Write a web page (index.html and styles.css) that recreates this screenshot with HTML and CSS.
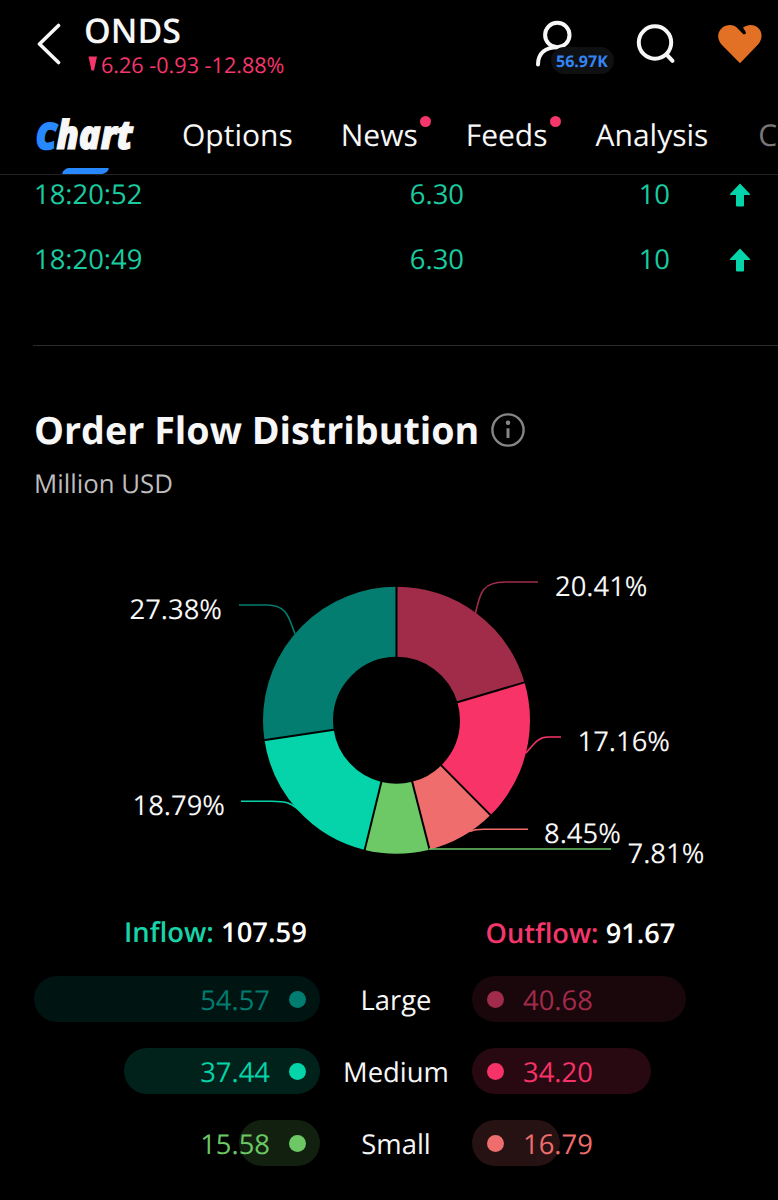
FILE: index.html
```html
<!DOCTYPE html>
<html lang="en">
<head>
    <meta charset="UTF-8">
    <meta name="viewport" content="width=device-width, initial-scale=1.0">
    <title>ONDS</title>
    <link rel="stylesheet" href="styles.css">
</head>
<body>
    <header class="header">
        <svg class="back" width="24" height="42" viewBox="0 0 24 42">
            <path d="M21.5 2.5 L2.5 21 L21.5 39.5"/>
        </svg>
        <div class="stock">
            <h1>ONDS</h1>
            <p>
                <svg width="10" height="16" viewBox="0 0 10 16"><path d="M0.5 0.5 H9 L6 14.5 H3.5 Z"/></svg>
                <span>6.26 -0.93 -12.88%</span>
            </p>
        </div>
        <div class="actions">
            <div class="followers">
                <svg width="40" height="48" viewBox="0 0 40 48">
                    <circle cx="22.3" cy="15" r="12.2"/>
                    <path d="M3 44.5 C3 33 10.8 27.3 22.3 27.2"/>
                </svg>
                <span class="count">56.97K</span>
            </div>
            <svg class="search" width="40" height="40" viewBox="0 0 40 40">
                <circle cx="19" cy="18.5" r="16.2"/>
                <path d="M31 31 L36.5 36.8"/>
            </svg>
            <svg class="heart" width="44" height="40" viewBox="0 0 44 40">
                <path d="M22 39.2 L3.5 20.5 C-1.2 15 -0.8 8 4 4 C9 0 15.5 0.2 19.5 4.2 L24.8 9.8 C26.8 11.2 28.6 9.6 27.6 7.8 L25 3.6 C30 0 36.5 0.2 40.3 4 C44.8 8.5 44.6 15 40 20.5 Z"/>
            </svg>
        </div>
    </header>

    <nav class="tabs">
        <a class="tab active"><span class="logo"><b>C</b>hart</span></a>
        <a class="tab">Options</a>
        <a class="tab new">News</a>
        <a class="tab new">Feeds</a>
        <a class="tab">Analysis</a>
        <a class="tab faded">C</a>
    </nav>

    <section class="trades">
        <div class="trade">
            <span>18:20:52</span>
            <span class="price">6.30</span>
            <span class="size">10</span>
            <svg width="22" height="24" viewBox="0 0 22 24"><path d="M11 0.5 L21 11 Q21.5 12 20.5 12 H15 V22.5 Q15 23.5 14 23.5 H8 Q7 23.5 7 22.5 V12 H1.5 Q0.5 12 1 11 Z"/></svg>
        </div>
        <div class="trade">
            <span>18:20:49</span>
            <span class="price">6.30</span>
            <span class="size">10</span>
            <svg width="22" height="24" viewBox="0 0 22 24"><path d="M11 0.5 L21 11 Q21.5 12 20.5 12 H15 V22.5 Q15 23.5 14 23.5 H8 Q7 23.5 7 22.5 V12 H1.5 Q0.5 12 1 11 Z"/></svg>
        </div>
    </section>

    <section class="flow">
        <h2>
            <span>Order Flow Distribution</span>
            <svg width="34" height="34" viewBox="0 0 34 34">
                <circle class="ring" cx="17" cy="17" r="15.6"/>
                <circle class="dot" cx="17" cy="9.8" r="2.3"/>
                <path d="M17 15.3 V25"/>
            </svg>
        </h2>
        <p class="unit">Million USD</p>

        <svg class="chart" width="778" height="340" viewBox="0 540 778 340">
            <!-- slices, clockwise from 12 o'clock -->
            <g class="slices" transform="translate(396.5 720.3) rotate(-90)">
                <circle class="out-large" r="98.5" pathLength="100" stroke-dasharray="20.41 79.59"/>
                <circle class="out-medium" r="98.5" pathLength="100" stroke-dasharray="17.16 82.84" stroke-dashoffset="-20.41"/>
                <circle class="out-small" r="98.5" pathLength="100" stroke-dasharray="8.45 91.55" stroke-dashoffset="-37.57"/>
                <circle class="in-small" r="98.5" pathLength="100" stroke-dasharray="7.81 92.19" stroke-dashoffset="-46.02"/>
                <circle class="in-medium" r="98.5" pathLength="100" stroke-dasharray="18.79 81.21" stroke-dashoffset="-53.83"/>
                <circle class="in-large" r="98.5" pathLength="100" stroke-dasharray="27.38 72.62" stroke-dashoffset="-72.62"/>
            </g>
            <g class="gaps" transform="translate(396.5 720.3)">
                <path d="M0 -60 V-136"/>
                <path d="M0 -60 V-136" transform="rotate(73.48)"/>
                <path d="M0 -60 V-136" transform="rotate(135.25)"/>
                <path d="M0 -60 V-136" transform="rotate(165.67)"/>
                <path d="M0 -60 V-136" transform="rotate(193.79)"/>
                <path d="M0 -60 V-136" transform="rotate(261.43)"/>
            </g>
            <g class="leaders">
                <path class="out-large" d="M475.5 613 C480 596 480 582 505 582 H538"/>
                <path class="out-medium" d="M526 753 C534 744 538 737 548 737 H561"/>
                <path class="out-small" d="M470 831.5 Q475 829.2 484 829.2 H528"/>
                <path class="in-small" d="M429 849 H611"/>
                <path class="in-medium" d="M299 810 C291 804 290 801.3 272 801.3 H241"/>
                <path class="in-large" d="M295 634 C289 619 288 605 267 605 H239"/>
            </g>
            <g class="labels">
                <text x="555" y="596">20.41%</text>
                <text x="577.5" y="751">17.16%</text>
                <text x="544" y="843">8.45%</text>
                <text x="627.5" y="863">7.81%</text>
                <text x="132.5" y="815">18.79%</text>
                <text x="129.5" y="619">27.38%</text>
            </g>
        </svg>

        <div class="totals">
            <div class="inflow">Inflow: <b>107.59</b></div>
            <div class="outflow">Outflow: <b>91.67</b></div>
        </div>

        <div class="row">
            <div class="cell in in-large">
                <div class="bar" style="width: 286px"></div>
                <div class="value">54.57<i></i></div>
            </div>
            <div class="name">Large</div>
            <div class="cell out out-large">
                <div class="bar" style="width: 214px"></div>
                <div class="value"><i></i>40.68</div>
            </div>
        </div>
        <div class="row">
            <div class="cell in in-medium">
                <div class="bar" style="width: 196px"></div>
                <div class="value">37.44<i></i></div>
            </div>
            <div class="name">Medium</div>
            <div class="cell out out-medium">
                <div class="bar" style="width: 179px"></div>
                <div class="value"><i></i>34.20</div>
            </div>
        </div>
        <div class="row">
            <div class="cell in in-small">
                <div class="bar" style="width: 81px"></div>
                <div class="value">15.58<i></i></div>
            </div>
            <div class="name">Small</div>
            <div class="cell out out-small">
                <div class="bar" style="width: 88px"></div>
                <div class="value"><i></i>16.79</div>
            </div>
        </div>
    </section>
</body>
</html>
```
FILE: styles.css
```css
* {
    box-sizing: border-box;
}
body {
    margin: 0;
    height: 1200px;
    overflow: hidden;
    background-color: #000;
    color: #f7f7f7;
    font-family: "Open Sans", "Noto Sans", sans-serif;
    font-size: 27.4px;
    text-rendering: geometricPrecision;
}
h1, h2, p {
    margin: 0;
}
svg {
    display: block;
    flex: none;
    fill: none;
}

/* header */
.header {
    display: flex;
    height: 92px;
    padding: 0 16px 0 37px;
}
.back {
    margin-top: 23px;
    stroke: #f7f7f7;
    stroke-width: 3.6;
    stroke-linecap: round;
    stroke-linejoin: round;
}
.stock {
    margin-left: 23px;
    padding-top: 11px;
}
.stock h1 {
    font-size: 34px;
    line-height: 38px;
    font-weight: 600;
}
.stock p {
    display: flex;
    margin-top: 2px;
    padding-left: 4px;
    font-size: 21.6px;
    line-height: 29px;
    color: #f5366b;
}
.stock p svg {
    margin: 5px 3px 0 0;
    fill: #f5366b;
}
.actions {
    display: flex;
    margin-left: auto;
    stroke: #f7f7f7;
    stroke-width: 4;
    stroke-linecap: round;
}
.followers {
    position: relative;
    width: 101px;
    padding-top: 20px;
}
.count {
    position: absolute;
    left: 16px;
    top: 47px;
    width: 63px;
    height: 27px;
    border-radius: 14px;
    background-color: #0f1011;
    color: #3385f5;
    font-size: 16px;
    line-height: 28px;
    font-weight: 700;
    text-indent: 5px;
}
.search {
    margin: 24px 42px 0 0;
}
.heart {
    margin-top: 24px;
    fill: #e27125;
    stroke: none;
}

/* tabs */
.tabs {
    display: flex;
    gap: 48px;
    height: 83px;
    padding-left: 36px;
    border-bottom: 1px solid #222;
    font-size: 30px;
    line-height: 85px;
}
.tab {
    position: relative;
    flex: none;
}
.tab.active {
    width: 98px;
}
.logo {
    display: block;
    font-size: 40px;
    line-height: 83px;
    font-style: italic;
    font-weight: 800;
    transform: scaleX(0.9);
    transform-origin: left;
    -webkit-text-stroke: 1.2px;
}
.logo b {
    color: #2788ff;
    font-size: 36px;
    font-weight: 800;
    -webkit-text-stroke: 2px;
}
.tab.active::after {
    content: "";
    position: absolute;
    left: 27px;
    bottom: 0;
    width: 45px;
    height: 6px;
    border-radius: 5px 1px 5px 1px;
    background-color: #2788ff;
    transform: skewX(-20deg);
}
.tab.new::after {
    content: "";
    position: absolute;
    right: -13px;
    top: 24px;
    width: 11px;
    height: 11px;
    border-radius: 50%;
    background-color: #f5366b;
}
.faded {
    margin-left: 2px;
    color: #777;
}

/* trades */
.trades {
    height: 171px;
    margin-left: 33px;
    border-bottom: 1px solid #2b2b2b;
    color: #1bcba0;
}
.trade {
    display: grid;
    grid-template-columns: 240px 190px 206px 108px;
    align-items: center;
    height: 65px;
    padding-left: 1px;
}
.trade:first-child {
    height: 52px;
    padding-bottom: 13px;
}
.price, .size {
    text-align: right;
}
.trade svg {
    justify-self: center;
    margin-left: 31px;
    fill: #05d3a9;
}

/* order flow */
.flow h2 {
    display: flex;
    align-items: center;
    height: 54px;
    margin-top: 57px;
    padding-left: 34px;
    font-size: 37.7px;
    font-weight: 700;
}
.flow h2 svg {
    margin: 0 0 1px 12px;
    stroke: #858585;
    stroke-width: 2.4;
}
.flow h2 .dot {
    fill: #858585;
    stroke: none;
}
.flow h2 path {
    stroke-width: 3;
}
.unit {
    height: 83px;
    padding: 8px 0 0 34px;
    color: #bdbdbd;
    font-size: 25.8px;
    line-height: 36px;
}
.in-large { color: #027d70; stroke: #027d70; }
.in-medium { color: #05d3a9; stroke: #05d3a9; }
.in-small { color: #6dc866; stroke: #6dc866; }
.out-large { color: #a12c4a; stroke: #a12c4a; }
.out-medium { color: #f73368; stroke: #f73368; }
.out-small { color: #ef6d6d; stroke: #ef6d6d; }
.slices {
    stroke-width: 70;
}
.gaps {
    stroke: #000;
    stroke-width: 2;
}
.leaders {
    stroke-width: 1.6;
}
.labels {
    fill: #f7f7f7;
}
.totals {
    display: grid;
    grid-template-columns: 1fr 1fr;
    height: 96px;
    padding-top: 33px;
    font-weight: 600;
    line-height: 40px;
}
.totals b {
    font-weight: 600;
    color: #fff;
}
.inflow {
    padding-left: 124px;
    color: #18d3a8;
}
.outflow {
    padding-left: 96.5px;
    font-size: 27.2px;
    color: #f5366b;
}
.row {
    display: grid;
    grid-template-columns: 286px 152px 286px;
    height: 46px;
    margin: 0 0 26px 34px;
    line-height: 49px;
}
.name {
    text-align: center;
}
.cell {
    display: grid;
    grid-template-rows: 46px;
}
.bar, .value {
    grid-area: 1 / 1;
}
.in .bar {
    justify-self: end;
}
.bar {
    border-radius: 23px;
    background-color: currentColor;
    opacity: 0.16;
}
.value {
    display: flex;
    align-items: flex-start;
}
.in .value {
    justify-content: flex-end;
    padding-right: 14px;
}
.out .value {
    padding-left: 15px;
}
.value i {
    width: 17px;
    height: 17px;
    margin-top: 15px;
    border-radius: 50%;
    background-color: currentColor;
}
.in i {
    margin-left: 19px;
}
.out i {
    margin-right: 19px;
}
```
